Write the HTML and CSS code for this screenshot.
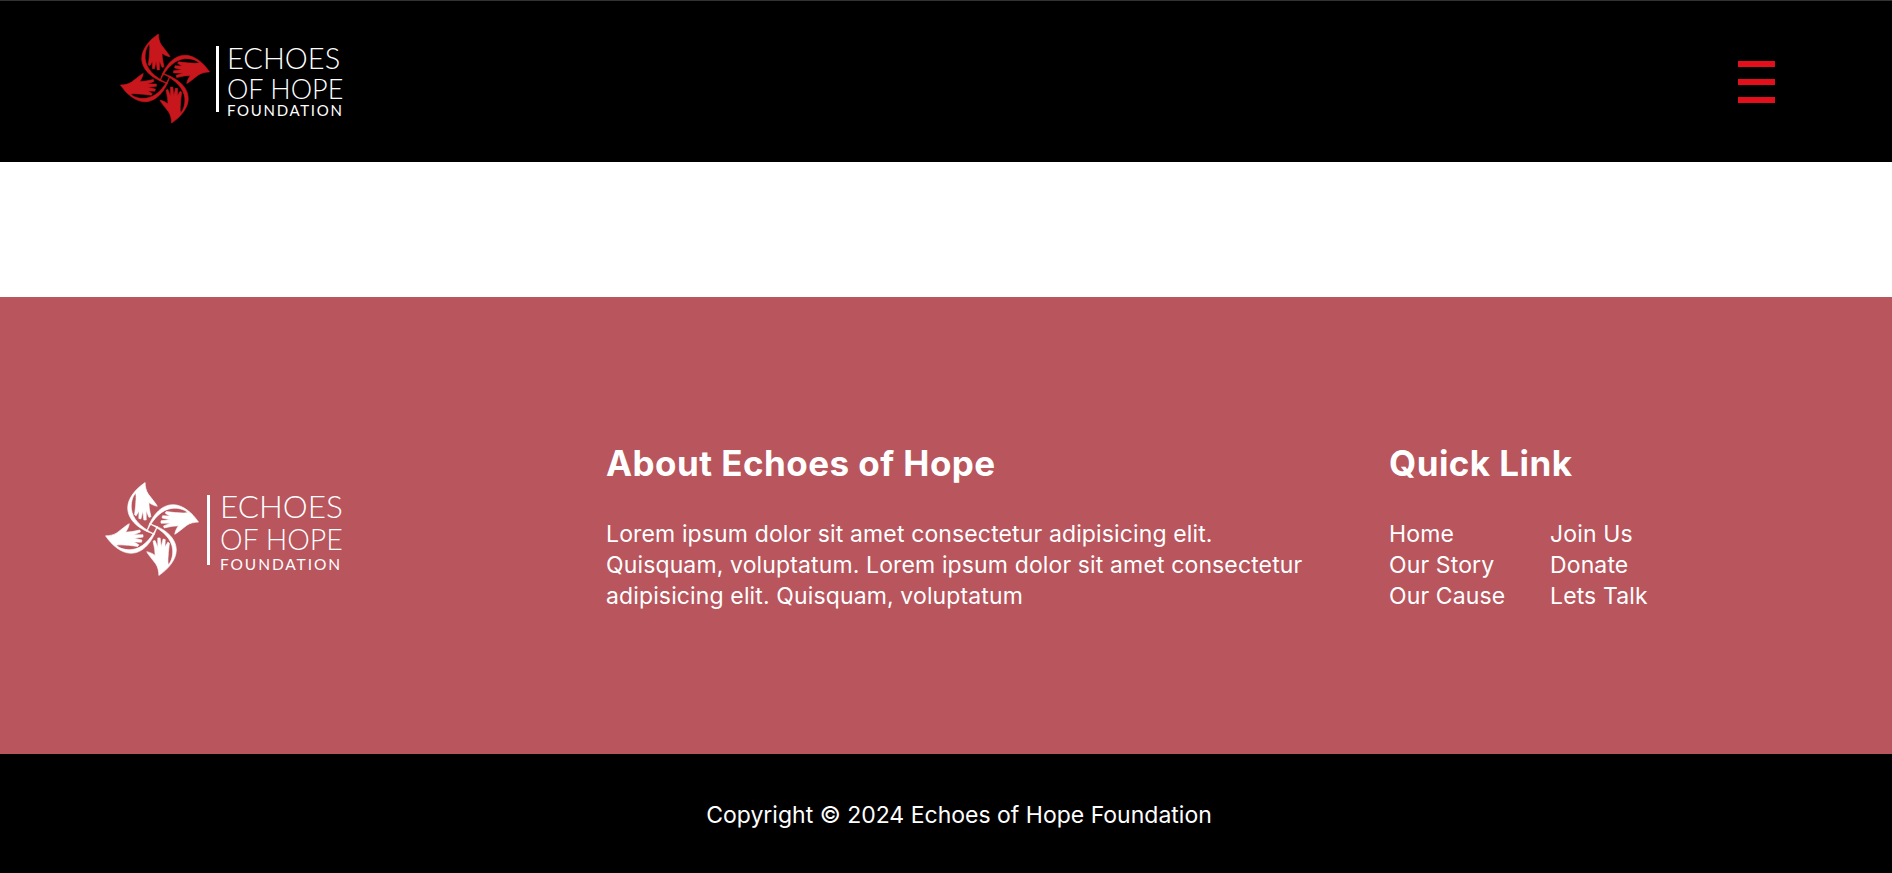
FILE: index.html
```html
<html>
	<head>
		<title>Echoes of Hope Foundation</title>
		<link rel="stylesheet" href="styles.css">
	</head>
	<body>
		<svg class="defs" width="0" height="0">
			<defs>
				<path id="blade" d="M52 54C38 50 26.5 41 26.5 29C26.5 20 34 11 43 5C43 9 44 13 46 16L53 25L54.5 27.5C51 27 48 25 46.5 24L47 30L48.5 37.5L46.6 38L44 31.5L44 40.5L41.8 40.5L40.8 32L39 39.5L37 39L37.2 32L34.5 36.5L33 35.5L34 27C34 23 35 19 34 15C30.5 19 29.5 25 30 30C31 39 38 47 52 54Z"/>
				<g id="mark">
					<use href="#blade"/>
					<use href="#blade" transform="rotate(90 49.5 49)"/>
					<use href="#blade" transform="rotate(180 49.5 49)"/>
					<use href="#blade" transform="rotate(270 49.5 49)"/>
				</g>
			</defs>
		</svg>
		<header class="top">
			<a class="logo logo-red" href="#">
				<svg class="mark" viewBox="5 5 89 89"><use href="#mark"/></svg>
				<span class="rule"></span>
				<span class="words"><span class="w1">ECHOES</span><span class="w2">OF HOPE</span><span class="w3">FOUNDATION</span></span>
			</a>
			<button class="burger"><span></span><span></span><span></span></button>
		</header>
		<div class="blank"></div>
		<footer class="foot">
			<a class="logo logo-white" href="#">
				<svg class="mark" viewBox="5 5 89 89"><use href="#mark"/></svg>
				<span class="rule"></span>
				<span class="words"><span class="w1">ECHOES</span><span class="w2">OF HOPE</span><span class="w3">FOUNDATION</span></span>
			</a>
			<div class="about">
				<h2>About Echoes of Hope</h2>
				<p>Lorem ipsum dolor sit amet consectetur adipisicing elit. Quisquam, voluptatum. Lorem ipsum dolor sit amet consectetur adipisicing elit. Quisquam, voluptatum</p>
			</div>
			<div class="links">
				<h2>Quick Link</h2>
				<ul>
					<li><a href="#">Home</a></li>
					<li><a href="#">Join Us</a></li>
					<li><a href="#">Our Story</a></li>
					<li><a href="#">Donate</a></li>
					<li><a href="#">Our Cause</a></li>
					<li><a href="#">Lets Talk</a></li>
				</ul>
			</div>
		</footer>
		<div class="copy">Copyright © 2024 Echoes of Hope Foundation</div>
	</body>
</html>
```

FILE: styles.css
```css
body
{
	margin: 0;
	background: #ffffff;
	color: #ffffff;
	font-family: Inter, "Liberation Sans", sans-serif;
}
a
{
	color: #ffffff;
	text-decoration: none;
}
.defs
{
	display: block;
}

.top
{
	height: 162px;
	box-sizing: border-box;
	background: #000000;
	border-top: 1px solid #333333;
	padding: 0 117px 0 120px;
	display: flex;
	align-items: center;
	justify-content: space-between;
}
.blank
{
	height: 135px;
}

.logo
{
	display: flex;
	align-items: center;
}
.logo-red
{
	margin-bottom: 5px;
}
.logo-red .mark
{
	fill: #c8161d;
	stroke: #c8161d;
	stroke-width: 0.6;
	width: 90px;
	height: 90px;
	margin-right: 6px;
}
.logo-white .mark
{
	fill: #ffffff;
	stroke: #ffffff;
	stroke-width: 0.6;
	width: 94px;
	height: 95px;
	margin-right: 8px;
}
.rule
{
	width: 3px;
	height: 66px;
	background: #ffffff;
}
.logo-red .rule
{
	margin-right: 8px;
}
.logo-white .rule
{
	height: 70px;
	margin-right: 10px;
}
.words
{
	display: flex;
	flex-direction: column;
	font-family: Lato, sans-serif;
	font-weight: 300;
	line-height: 1;
}
.logo-red .words
{
	margin-top: 3px;
}
.logo-white .words
{
	margin-top: 4px;
}
.w1
{
	font-size: 29px;
	height: 32px;
}
.w2
{
	font-size: 27px;
	height: 28px;
}
.w3
{
	font-weight: 400;
	font-size: 15px;
	height: 16px;
	letter-spacing: 1.7px;
}
.logo-white .w1
{
	font-size: 31.5px;
	height: 34px;
}
.logo-white .w2
{
	font-size: 28.5px;
	height: 32px;
}
.logo-white .w3
{
	font-size: 15.5px;
	letter-spacing: 1.9px;
}

.burger
{
	width: 37px;
	padding: 0;
	background: none;
	border: 0;
	display: flex;
	flex-direction: column;
	gap: 12px;
}
.burger span
{
	height: 6px;
	background: #e30f1a;
}

.foot
{
	height: 457px;
	box-sizing: border-box;
	background: #b8555d;
	display: flex;
	padding: 146px 0 0 105px;
}
.foot .logo
{
	align-self: flex-start;
	margin-top: 39px;
	width: 501px;
}
.foot h2
{
	margin: 0 0 36px;
	font-size: 35px;
	line-height: 40px;
	font-weight: 700;
	letter-spacing: 0.45px;
}
.about
{
	width: 783px;
}
.about p
{
	margin: 0;
	font-size: 23px;
	letter-spacing: 0.13px;
	line-height: 31px;
	width: 700px;
}
.links ul
{
	list-style: none;
	margin: 0;
	padding: 0;
	display: grid;
	grid-template-columns: 161px auto;
	font-size: 23px;
	letter-spacing: 0.13px;
	line-height: 31px;
}

.copy
{
	height: 119px;
	box-sizing: border-box;
	padding: 4px 0 0 26px;
	background: #000000;
	text-align: center;
	font-size: 23px;
	line-height: 115px;
}
```
